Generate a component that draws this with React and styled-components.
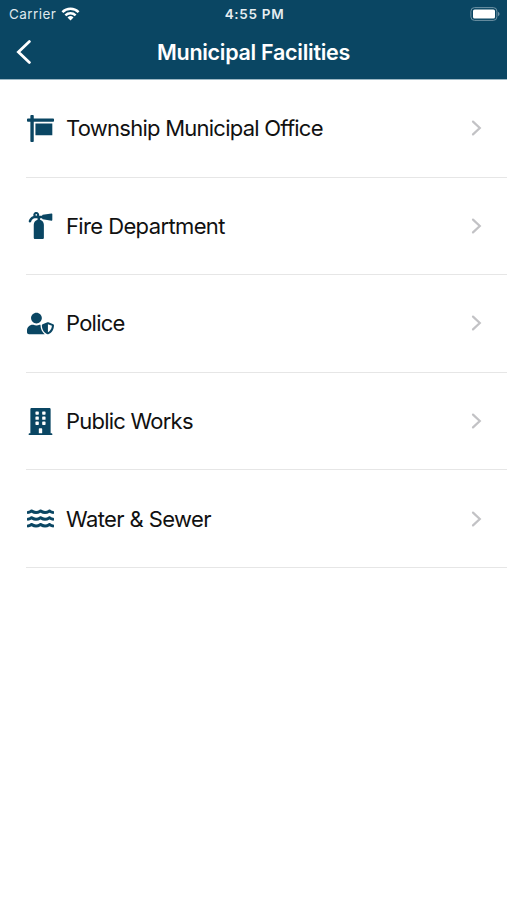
import React from 'react'
import styled, { createGlobalStyle } from 'styled-components'
import { FaSign, FaFireExtinguisher, FaUserShield, FaBuilding, FaWater } from 'react-icons/fa'

const GlobalStyle = createGlobalStyle`
body{
margin:0;
background:white;
font-family:Inter, "Liberation Sans", sans-serif;
}
svg{
display:block;
}
`;
const Header = styled.header`
height:80px;
box-sizing:border-box;
background:#0a4663;
border-bottom:1px solid #9db8c4;
color:white;
`;
const StatusBar = styled.div`
height:27px;
padding:0 7px 0 9px;
display:grid;
grid-template-columns:1fr auto 1fr;
align-items:center;
font-size:13.5px;
`;
const Carrier = styled.div`
display:flex;
align-items:center;
gap:5px;
color:#dfe8ec;
letter-spacing:0.45px;
`;
const Clock = styled.span`
font-size:13.5px;
font-weight:600;
letter-spacing:0.7px;
color:#e6edf0;
`;
const Battery = styled.svg`
justify-self:end;
`;
const NavBar = styled.div`
height:50px;
padding:0 16px;
display:grid;
grid-template-columns:1fr auto 1fr;
align-items:center;
`;
const Title = styled.h1`
margin:0;
font-size:21.5px;
font-weight:600;
letter-spacing:-0.28px;
`;
const List = styled.div`
padding-left:26px;
`;
const Row = styled.div`
height:97.6px;
box-sizing:border-box;
border-bottom:1px solid #e6e6e6;
padding-right:25px;
display:flex;
align-items:center;
`;
const IconBox = styled.div`
width:29px;
margin-right:11px;
color:#0a4663;
display:flex;
justify-content:center;
font-size:27px;
`;
const Label = styled.span`
flex:1;
font-size:22px;
letter-spacing:${props => props.$spacing}px;
color:#111;
`;

const items = [
    { label: "Township Municipal Office", icon: FaSign, spacing: -0.75 },
    { label: "Fire Department", icon: FaFireExtinguisher, spacing: -0.62 },
    { label: "Police", icon: FaUserShield, spacing: -0.75 },
    { label: "Public Works", icon: FaBuilding, spacing: -0.77 },
    { label: "Water & Sewer", icon: FaWater, spacing: -0.6 },
]

const Wifi = () => (
    <svg width="19" height="14" viewBox="0 0 18 14" fill="none" stroke="white" strokeWidth="2.5">
        <path d="M0.9 5.1a11.6 11.6 0 0 1 16.2 0" />
        <path d="M3.9 8.3a7.3 7.3 0 0 1 10.2 0" />
        <path d="M9 13.6L6 10.5a4.3 4.3 0 0 1 6 0z" fill="white" stroke="none" />
    </svg>
)

const App = () => {
    return (
        <>
            <GlobalStyle />
            <Header>
                <StatusBar>
                    <Carrier>Carrier <Wifi /></Carrier>
                    <Clock>4:55 PM</Clock>
                    <Battery width="30" height="14" viewBox="0 0 30 14">
                        <rect x="0.9" y="0.6" width="26" height="12.8" rx="3.6" fill="none" stroke="#6f93a5" />
                        <rect x="3" y="2.5" width="22" height="9" rx="1.6" fill="white" />
                        <path d="M28 4.8v4.4q1.6-.7 1.6-2.2t-1.6-2.2z" fill="#6f93a5" />
                    </Battery>
                </StatusBar>
                <NavBar>
                    <svg width="15" height="24" viewBox="0 0 15 24" fill="none" stroke="white" strokeWidth="2.8">
                        <path d="M13.4 1.6L2.4 12l11 10.4" strokeLinecap="round" />
                    </svg>
                    <Title>Municipal Facilities</Title>
                </NavBar>
            </Header>
            <List>
                {items.map(({ label, icon: Icon, spacing }) => (
                    <Row key={label}>
                        <IconBox><Icon /></IconBox>
                        <Label $spacing={spacing}>{label}</Label>
                        <svg width="11" height="16" viewBox="0 0 11 16" fill="none" stroke="#c2c2c5" strokeWidth="2.2">
                            <path d="M2 1.6L8.8 8 2 14.4" strokeLinecap="round" />
                        </svg>
                    </Row>
                ))}
            </List>
        </>
    )
}

export default App
